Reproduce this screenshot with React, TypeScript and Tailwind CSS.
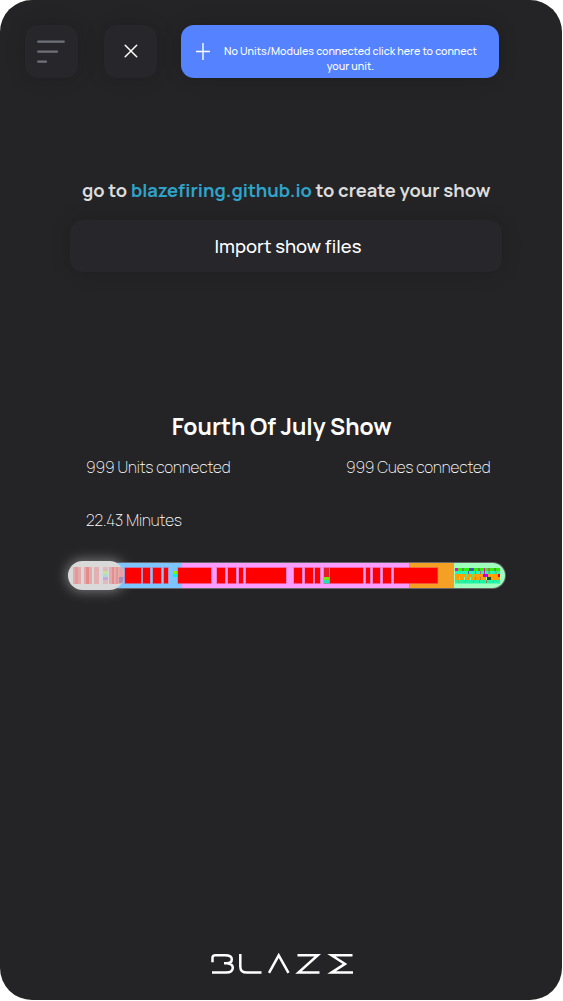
import React from "react";

type Block = [x: number, width: number];
type Chip = [x: number, y: number, width: number, height: number, color: string];

const cues: Block[] = [
  [125, 16], [143, 7], [153, 8], [164, 4], [178, 33], [217, 8], [228, 8],
  [239, 4], [246, 40], [294, 8], [305, 8], [315, 5], [324, 5], [330, 33],
  [366, 4], [373, 7], [383, 8], [394, 43.5],
];

const earlyCues: Chip[] = [
  [73, 567, 8, 17, "#e2a4a6"], [75, 567, 3, 17, "#e69596"],
  [84, 567, 8, 17, "#e2a4a6"], [86, 567, 3, 17, "#e58687"],
  [94, 567, 5, 17, "#e2aaac"], [103, 567, 5, 17, "#e0b4b5"],
  [103, 571, 5, 3, "#c5e69a"], [103, 574, 5, 3, "#9fe4d1"], [103, 577, 5, 3, "#c9a2e8"],
  [109, 567, 14, 17, "#e2a4a6"], [112, 567, 2, 17, "#e58a8b"], [116, 567, 2, 17, "#e59092"],
  [119, 577, 5, 6, "#a28abd"], [120, 567, 4, 10, "#e6a0a0"],
];

const chips: Chip[] = [
  [173, 571, 4, 3, "#80f500"], [173, 574, 4, 3, "#00f5dc"],
  [324, 577, 5, 3, "#80e500"], [324, 580, 5, 3.5, "#22e0b8"],
  [455, 568, 45, 3, "#24f500"], [455, 571, 45, 3, "#22f7b5"],
  [455, 574, 45, 3, "#ffa000"], [455, 577, 31, 3, "#ffa000"], [491, 577, 9, 3, "#ffa000"],
  [455, 580, 45, 3.5, "#20f5a5"],
  [455, 568, 3, 3, "#ff00d4"], [462, 568, 2, 3, "#648f65"], [469, 568, 5, 3, "#4657a7"],
  [478, 568, 2, 3, "#668b55"], [488, 568, 2, 3, "#a17754"], [494, 568, 2, 3, "#5b963c"],
  [468, 571, 1, 3, "#6450ae"], [475, 571, 1, 3, "#38b96f"], [480, 571, 1, 3, "#a86b82"],
  [484, 568, 1, 6, "#ed0fb0"], [488, 571, 2, 3, "#3ccf7c"], [495, 571, 2, 3, "#5cce65"],
  [461, 574, 1, 3, "#43ef88"], [466, 574, 1, 3, "#43ef88"], [472, 574, 1, 3, "#43ef88"],
  [477, 574, 1, 3, "#43ef88"], [483, 574, 5, 3, "#b600ef"], [491, 574, 1, 3, "#78e06c"],
  [498, 574, 2, 3, "#ff0000"],
  [459, 577, 1, 3, "#7cffb5"], [464, 577, 1, 3, "#7cffb5"], [470, 577, 1, 3, "#7cffb5"],
  [475, 577, 1, 3, "#a9843f"], [480, 577, 1, 3, "#bb7947"], [487, 577, 4, 3, "#294423"],
  [458, 580, 1, 3, "#6cc969"], [465, 580, 1, 3, "#65c67a"], [473, 580, 1, 3, "#65c67a"],
  [479, 580, 1, 3, "#58bd83"], [486, 580, 1, 3, "#a68554"], [493, 580, 1, 3, "#4fd27c"],
];

function ShowTimeline() {
  return (
    <svg className="block h-[60px] w-full" viewBox="0 546 563 60" aria-label="Show timeline">
      <defs>
        <clipPath id="track"><rect x="69" y="563" width="436" height="25" rx="12.5" /></clipPath>
        <clipPath id="handle"><rect x="68" y="561" width="56" height="29" rx="14.5" /></clipPath>
        <filter id="glow" x="-40%" y="-80%" width="180%" height="260%"><feGaussianBlur stdDeviation="6" /></filter>
      </defs>
      <rect x="66" y="559" width="60" height="33" rx="16" fill="#dddddd" opacity=".42" filter="url(#glow)" />
      <rect x="68" y="562" width="438" height="27" rx="13.5" fill="#66666b" />
      <g clipPath="url(#track)">
        <rect x="68" y="563" width="114" height="25" fill="#7dc5ff" />
        <rect x="182" y="563" width="227.5" height="25" fill="#fa9cff" />
        <rect x="409.5" y="563" width="44.5" height="25" fill="#f3a024" />
        <rect x="454" y="563" width="52" height="25" fill="#9fffbc" />
        {cues.map(([x, width]) => (
          <rect key={x} x={x - 0.6} y="567" width={width + 1.2} height="17" fill="#ed3159" opacity=".5" />
        ))}
        {cues.map(([x, width]) => (
          <rect key={x} x={x} y="568" width={width} height="15.2" fill={x === 324 ? "#e51b26" : "#ff0000"} />
        ))}
        {chips.map(([x, y, width, height, fill], i) => (
          <rect key={i} x={x} y={y} width={width} height={height} fill={fill} />
        ))}
      </g>
      <rect x="68" y="561" width="56" height="29" rx="14.5" fill="#d9d9d9" />
      <g clipPath="url(#handle)">
        {earlyCues.map(([x, y, width, height, fill], i) => (
          <rect key={i} x={x} y={y} width={width} height={height} fill={fill} opacity=".88" />
        ))}
      </g>
    </svg>
  );
}

export default function App() {
  return (
    <div className="h-[1001px] w-[563px] overflow-hidden bg-white">
      <main className="flex h-[1000.4px] w-[562.4px] flex-col overflow-hidden rounded-[32px] bg-[#242426] font-['Manrope','Inter',sans-serif] text-white">
        <header className="flex shrink-0 pl-[25px] pt-[25px]">
          <button aria-label="Menu" className="flex size-[53px] items-center justify-center rounded-[13px] bg-[#26262b] shadow-[0_0_20px_rgba(0,0,0,0.16)]">
            <svg className="size-[53px]" viewBox="0 0 53 53" fill="none" stroke="#70707a" strokeWidth="2.2" strokeLinecap="round">
              <path d="M13.2 16.7H38.8M13.2 26.7H32M13.2 36.7H21" />
            </svg>
          </button>
          <button aria-label="Close" className="ml-[26px] flex size-[53px] items-center justify-center rounded-[13px] bg-[#26262b] shadow-[0_0_20px_rgba(0,0,0,0.16)]">
            <svg className="size-[53px]" viewBox="0 0 53 53" fill="none" stroke="white" strokeWidth="1.5" strokeLinecap="round">
              <path d="m21.2 20.2 11.5 11.5M32.7 20.2 21.2 31.7" />
            </svg>
          </button>
          <button className="ml-[24.4px] mt-[0.4px] flex h-[52.4px] w-[318px] rounded-[13px] bg-[#5583ff] pl-[14.6px] shadow-[0_0_20px_rgba(0,0,0,0.16)]">
            <svg className="mt-[17.6px] h-[17px] w-[14px] shrink-0" viewBox="0 0 14 17" fill="none" stroke="white" strokeWidth="1.4">
              <path d="M7 0v17M0 8.5h14" />
            </svg>
            <span className="ml-[12px] mt-[19px] w-[257px] whitespace-nowrap text-center text-[10.7px] font-medium leading-[15px]">
              No Units/Modules connected click here to connect<br />your unit.
            </span>
          </button>
        </header>

        <section className="mt-[99px] shrink-0">
          <h2 className="ml-[82px] w-[408px] whitespace-nowrap text-center text-[18.4px] font-bold leading-[26px] text-[#dcdcdc]">
            go to <a className="text-[#2fa4cb]">blazefiring.github.io</a> to create your show
          </h2>
          <button className="ml-[70px] mt-[17px] flex h-[52px] w-[432px] items-center justify-center rounded-[13px] bg-[#26262b] pl-1 pt-0.5 text-[18.4px] font-medium shadow-[0_0_20px_rgba(0,0,0,0.16)]">
            Import show files
          </button>
        </section>

        <section className="mt-[138px] shrink-0">
          <h1 className="pl-px text-center text-[23px] font-bold leading-[32px] tracking-[-0.02px]">Fourth Of July Show</h1>
          <div className="ml-[86px] mt-[15px] flex w-[404.5px] justify-between whitespace-nowrap text-[15.33px] font-extralight leading-[22px] tracking-[-0.05px]">
            <span>999 Units connected</span>
            <span>999 Cues connected</span>
          </div>
          <p className="ml-[86px] mt-[31px] text-[15.33px] font-extralight leading-[22px] tracking-[-0.02px]">22.43 Minutes</p>
          <div className="mt-[14px] w-[563px]"><ShowTimeline /></div>
        </section>

        <footer className="mt-auto flex justify-center pb-[24.4px]">
          <svg className="ml-[2px] h-[24px] w-[145px]" viewBox="210 952 145 24" fill="none" stroke="#fff" strokeWidth="2.5" aria-label="Blaze">
            <path d="M212.5 962.2V957.5Q212.5 955.2 215.5 955.2H225Q231.8 955.2 231.8 959.3 231.8 963.3 227 963.3H224M227 963.3Q232.8 964 232.8 967.8 232.8 972.6 226 972.6H212M240.3 954V966.5Q240.3 972.6 247 972.6H261.5M269 972.8 278.7 955.3 288.5 972.8M297.5 955.2H317.8L298.5 972.6H319.5M352.5 955.2H331.5L345 963.9 331.5 972.6H353" />
          </svg>
        </footer>
      </main>
    </div>
  );
}
